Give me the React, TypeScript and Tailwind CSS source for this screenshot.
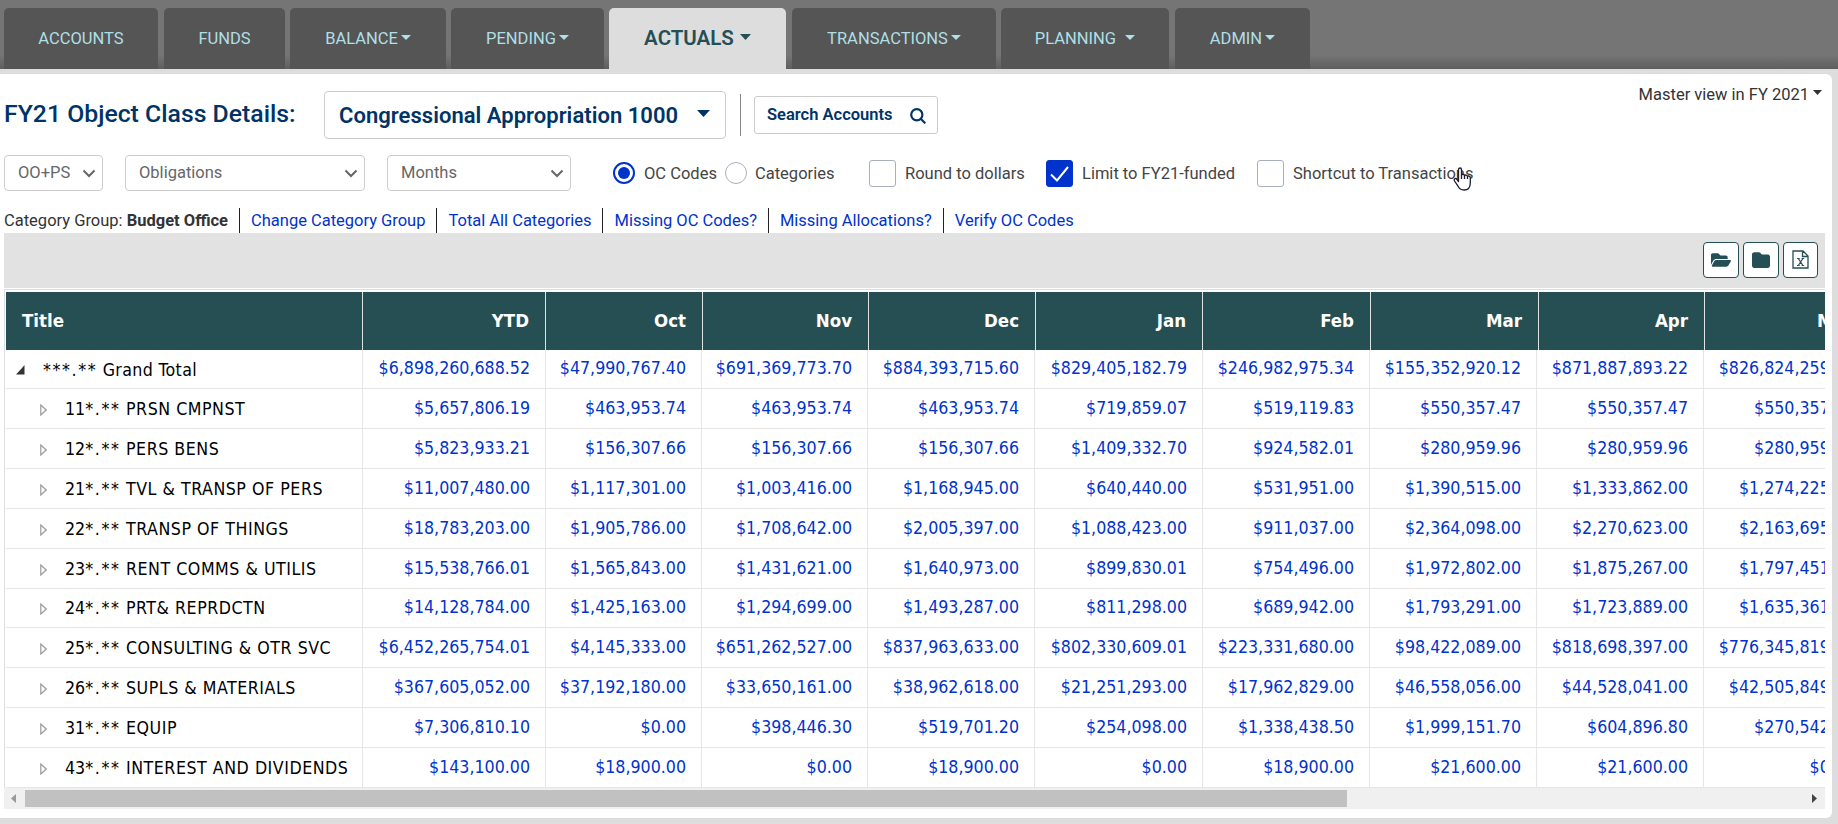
import { FaFolderOpen } from 'react-icons/fa';
import { FaFolder } from 'react-icons/fa6';

const tabs = [
  { label: 'ACCOUNTS', width: 'w-[154px]', caret: false, gap: 'mr-[6px]' },
  { label: 'FUNDS', width: 'w-[121px]', caret: false, gap: 'mr-[5px]' },
  { label: 'BALANCE', width: 'w-[156px]', caret: true, gap: 'mr-[5px]' },
  { label: 'PENDING', width: 'w-[153px]', caret: true, gap: 'mr-[5px]' },
  { label: 'ACTUALS', width: 'w-[177px]', caret: true, active: true, gap: 'mr-[6px]' },
  { label: 'TRANSACTIONS', width: 'w-[204px]', caret: true, gap: 'mr-[5px]' },
  { label: 'PLANNING', width: 'w-[168px]', caret: true, wide: true, gap: 'mr-[6px]' },
  { label: 'ADMIN', width: 'w-[135px]', caret: true, gap: '' },
];

const links = ['Change Category Group', 'Total All Categories', 'Missing OC Codes?', 'Missing Allocations?', 'Verify OC Codes'];

const columns = ['YTD', 'Oct', 'Nov', 'Dec', 'Jan', 'Feb', 'Mar', 'Apr', 'May'];

const headGrid = 'grid grid-cols-[357px_183px_157px_166px_167px_167px_168px_168px_166px_167px]';
const bodyGrid = 'grid grid-cols-[357px_183px_156px_166px_167px_168px_167px_167px_167px_167px]';

const rows = [
  { code: '', mask: '***.**', title: 'Grand Total', height: 'h-[39px]', values: ['$6,898,260,688.52', '$47,990,767.40', '$691,369,773.70', '$884,393,715.60', '$829,405,182.79', '$246,982,975.34', '$155,352,920.12', '$871,887,893.22', '$826,824,259.00'] },
  { code: '11', mask: '*.**', title: 'PRSN CMPNST', height: 'h-[40px]', values: ['$5,657,806.19', '$463,953.74', '$463,953.74', '$463,953.74', '$719,859.07', '$519,119.83', '$550,357.47', '$550,357.47', '$550,357.47'] },
  { code: '12', mask: '*.**', title: 'PERS BENS', height: 'h-[40px]', values: ['$5,823,933.21', '$156,307.66', '$156,307.66', '$156,307.66', '$1,409,332.70', '$924,582.01', '$280,959.96', '$280,959.96', '$280,959.96'] },
  { code: '21', mask: '*.**', title: 'TVL & TRANSP OF PERS', height: 'h-[40px]', values: ['$11,007,480.00', '$1,117,301.00', '$1,003,416.00', '$1,168,945.00', '$640,440.00', '$531,951.00', '$1,390,515.00', '$1,333,862.00', '$1,274,225.00'] },
  { code: '22', mask: '*.**', title: 'TRANSP OF THINGS', height: 'h-[40px]', values: ['$18,783,203.00', '$1,905,786.00', '$1,708,642.00', '$2,005,397.00', '$1,088,423.00', '$911,037.00', '$2,364,098.00', '$2,270,623.00', '$2,163,695.00'] },
  { code: '23', mask: '*.**', title: 'RENT COMMS & UTILIS', height: 'h-[40px]', values: ['$15,538,766.01', '$1,565,843.00', '$1,431,621.00', '$1,640,973.00', '$899,830.01', '$754,496.00', '$1,972,802.00', '$1,875,267.00', '$1,797,451.00'] },
  { code: '24', mask: '*.**', title: 'PRT& REPRDCTN', height: 'h-[39px]', values: ['$14,128,784.00', '$1,425,163.00', '$1,294,699.00', '$1,493,287.00', '$811,298.00', '$689,942.00', '$1,793,291.00', '$1,723,889.00', '$1,635,361.00'] },
  { code: '25', mask: '*.**', title: 'CONSULTING & OTR SVC', height: 'h-[40px]', values: ['$6,452,265,754.01', '$4,145,333.00', '$651,262,527.00', '$837,963,633.00', '$802,330,609.01', '$223,331,680.00', '$98,422,089.00', '$818,698,397.00', '$776,345,819.00'] },
  { code: '26', mask: '*.**', title: 'SUPLS & MATERIALS', height: 'h-[40px]', values: ['$367,605,052.00', '$37,192,180.00', '$33,650,161.00', '$38,962,618.00', '$21,251,293.00', '$17,962,829.00', '$46,558,056.00', '$44,528,041.00', '$42,505,849.00'] },
  { code: '31', mask: '*.**', title: 'EQUIP', height: 'h-[40px]', values: ['$7,306,810.10', '$0.00', '$398,446.30', '$519,701.20', '$254,098.00', '$1,338,438.50', '$1,999,151.70', '$604,896.80', '$270,542.00'] },
  { code: '43', mask: '*.**', title: 'INTEREST AND DIVIDENDS', height: 'h-[40px]', values: ['$143,100.00', '$18,900.00', '$0.00', '$18,900.00', '$0.00', '$18,900.00', '$21,600.00', '$21,600.00', '$0.00'] },
];

function Caret({ className = '' }: { className?: string }) {
  return (
    <svg className={className} viewBox="0 0 10 5" fill="currentColor" preserveAspectRatio="none">
      <path d="M0 0h10L5 5z" />
    </svg>
  );
}

function Select({ label, className }: { label: string; className: string }) {
  return (
    <button className={`flex h-9 items-center justify-between rounded border border-[#ccc] pl-[13px] pr-[6px] pt-px text-[#666] ${className}`}>
      {label}
      <svg className="h-[9px] w-[14px]" viewBox="0 0 14 9" fill="none" stroke="currentColor" strokeWidth="2">
        <path d="M1.5 1.5 7 7l5.5-5.5" />
      </svg>
    </button>
  );
}

function Checkbox({ label, checked = false, className = '' }: { label: string; checked?: boolean; className?: string }) {
  return (
    <label className={`mt-px flex items-center gap-[9px] whitespace-nowrap ${className}`}>
      <span className={`flex h-[27px] w-[27px] items-center justify-center rounded-[3px] border ${checked ? 'border-[#0033cc] bg-[#0033cc]' : 'border-[#a9afbb] bg-white'}`}>
        {checked && (
          <svg className="h-4 w-[19px]" viewBox="0 0 19 16" fill="none" stroke="white" strokeWidth="2">
            <path d="M1 8.5 7 14.5 18 1" />
          </svg>
        )}
      </span>
      <span className="pt-[2px]">{label}</span>
    </label>
  );
}

export default function App() {
  return (
    <div className="h-[824px] w-[1838px] overflow-hidden bg-[#ddd] font-['Roboto',sans-serif] text-[16.5px] text-[#333]">
      <nav className="flex h-[69px] items-end bg-[linear-gradient(#757575_0px,#757575_55px,#5e5e5e_69px)] pl-1">
        {tabs.map((tab) => (
          <a
            key={tab.label}
            className={`flex h-[61px] items-center justify-center whitespace-nowrap rounded-t-[5px] ${tab.width} ${tab.gap} ${
              tab.active ? 'bg-[#ddd] pb-px text-[20.5px] font-semibold text-[#244f54]' : 'bg-[#555] pt-px text-[#b0dfe5]'
            }`}
          >
            {tab.label}
            {tab.caret && (
              <Caret className={tab.active ? 'mb-[3px] ml-[6px] h-[6px] w-[11px]' : tab.wide ? 'mb-[4px] ml-[9px] h-[5px] w-[10px]' : 'mb-[4px] ml-[3px] h-[5px] w-[10px]'} />
            )}
          </a>
        ))}
      </nav>

      <main className="mt-[5px] h-[744px] w-[1832px] rounded-r-md bg-white pl-1 pr-[7px]">
        <div className="flex h-[80px] items-start">
          <h1 className="mt-[23px] w-[320px] whitespace-nowrap text-[24.8px] font-medium leading-[34px] text-[#003366]">FY21 Object Class Details:</h1>
          <button className="mt-[17px] flex h-[48px] w-[402px] items-center justify-between rounded border border-[#ccc] pl-[14px] pr-[15px] text-[22px] font-semibold tracking-[0.04px] text-[#003366]">
            Congressional Appropriation 1000
            <Caret className="mb-[3px] h-[7px] w-[13px]" />
          </button>
          <div className="ml-[14px] mt-5 h-[42px] w-px bg-[#888]" />
          <button className="ml-[13px] mt-[22px] flex h-[38px] w-[184px] items-center justify-between rounded-[3px] border border-[#ccc] pl-3 pr-[11px] pt-px font-semibold text-[#003366]">
            Search Accounts
            <svg className="h-4 w-4" viewBox="0 0 16 16" fill="none" stroke="currentColor" strokeWidth="2.2">
              <circle cx="6.8" cy="6.8" r="5.6" />
              <path d="M11 11l4.3 4.3" />
            </svg>
          </button>
          <div className="ml-auto mt-[10px] flex items-center leading-[22px]">
            Master view in FY 2021
            <Caret className="mb-[6px] ml-1 mr-[3px] h-[5px] w-[9px]" />
          </div>
        </div>

        <div className="flex h-[38px] items-center text-[#444]">
          <Select label="OO+PS" className="w-[99px]" />
          <Select label="Obligations" className="ml-[22px] w-[240px]" />
          <Select label="Months" className="ml-[22px] w-[184px]" />
          <label className="ml-[42px] flex w-[112px] items-center whitespace-nowrap">
            <span className="flex h-[22px] w-[22px] items-center justify-center rounded-full border-2 border-[#0033cc]">
              <span className="h-3 w-3 rounded-full bg-[#0033cc]" />
            </span>
            <span className="ml-[9px] mt-[2px]">OC Codes</span>
          </label>
          <label className="flex w-[144px] items-center">
            <span className="h-[22px] w-[22px] rounded-full border border-[#a9afbb]" />
            <span className="ml-[8px] mt-[2px]">Categories</span>
          </label>
          <Checkbox label="Round to dollars" className="w-[177px]" />
          <Checkbox label="Limit to FY21-funded" checked className="w-[211px]" />
          <div className="relative">
            <Checkbox label="Shortcut to Transactions" />
            <svg className="absolute left-[196px] top-[8px] h-6 w-[19px]" viewBox="0 0 19 24" fill="white" stroke="#1c1c2b" strokeWidth="1.3" strokeLinejoin="round">
              <path d="M5.5 14.5V2.7c0-2.3 3-2.3 3 0V8c.4-1.1 2.9-1 3 .6.5-1 2.8-.8 3 .8.7-.8 2.8-.4 2.8 1.3v5c0 4.3-2.3 7.3-6.3 7.3-3.5 0-5-1.7-6.3-4.3L1.500 14c-1-2 1-3.300 2.400-1.700z" />
              <path d="M8.5 8v4M11.5 8.6V12M14.5 9.4V12" />
            </svg>
          </div>
        </div>

        <div className="mt-4 flex h-[25px] items-center">
          <span className="whitespace-nowrap pr-[11px] pt-px">
            Category Group: <b>Budget Office</b>
          </span>
          {links.map((link) => (
            <a key={link} className="h-[25px] whitespace-nowrap border-l border-[#222] pl-[11px] pr-[11px] leading-[26px] tracking-[-0.01px] text-[#0033cc]">
              {link}
            </a>
          ))}
        </div>

        <div className="flex h-[55px] items-center justify-end gap-1 bg-[#e2e2e2] pb-[2px] pr-[7px] text-[#244f54]">
          <button className="flex h-9 w-9 items-center justify-center rounded border border-[#244f54] bg-white">
            <FaFolderOpen className="h-5 w-5" />
          </button>
          <button className="flex h-9 w-9 items-center justify-center rounded border border-[#244f54] bg-white">
            <FaFolder className="h-[18px] w-[18px]" />
          </button>
          <button className="flex h-9 w-[35px] items-center justify-center rounded border border-[#244f54] bg-white">
            <svg className="h-[19px] w-[17px]" viewBox="0 0 17 19" fill="none" stroke="currentColor" strokeWidth="1.3">
              <path d="M1 1h10l5 5v12H1zM10.5 1v5.5H16" />
              <path d="M6.3 8.5l4.6 7M10.9 8.5l-4.6 7M5 8.5h2.7M9.6 8.5h2.6M5 15.5h2.7M9.6 15.5h2.6" strokeWidth="1.2" />
            </svg>
          </button>
        </div>

        <div className="mt-px h-[499px] overflow-hidden border-l border-t border-[#dcdfe2] pl-px pt-[2px] font-['DejaVu_Sans_Condensed','DejaVu_Sans',sans-serif] text-[17.65px] [font-stretch:condensed]">
          <div className={`h-[58px] bg-[#264f54] text-[18.5px] font-bold text-white ${headGrid}`}>
            <div className="flex items-center border-r border-[#e0e4e5] pl-4">Title</div>
            {columns.map((column) => (
              <div key={column} className="flex items-center justify-end border-r border-[#e0e4e5] pr-4">
                {column}
              </div>
            ))}
          </div>
          {rows.map((row, i) => (
            <div key={row.title} className={`${row.height} ${bodyGrid} text-[#0033cc]`}>
              <div className="flex items-center whitespace-nowrap border-b border-r border-[#e6e6e6] text-black">
                {i === 0 ? (
                  <svg className="ml-[10px] mr-[18px] mt-px h-[10px] w-[9px]" viewBox="0 0 9 10" fill="#333">
                    <path d="M8.5 0v9.5H0L6 3z" />
                  </svg>
                ) : (
                  <svg className="ml-[34px] mr-[18px] mt-[2px] h-[12px] w-[7px]" viewBox="0 0 7 12" fill="none" stroke="#a0a0a0" strokeWidth="1.3">
                    <path d="M.8 1v10L6.2 6z" />
                  </svg>
                )}
                <span className={i === 0 ? 'pt-[3px] tracking-[0.35px]' : 'pt-px tracking-[0.52px]'}>
                  <span className="tracking-normal">{row.code}</span>
                  <span className="tracking-[1.6px]">{row.mask}</span> {row.title}
                </span>
              </div>
              {row.values.map((value, j) => (
                <div key={j} className="flex items-center justify-end border-b border-r border-[#e6e6e6] pb-px pr-[15px]">
                  {value}
                </div>
              ))}
            </div>
          ))}
        </div>

        <div className="flex h-[21px] items-center bg-[#f0f0f0] py-[2px]">
          <svg className="ml-[7px] mr-[9px] h-[9px] w-[5px]" viewBox="0 0 5 9" fill="#999">
            <path d="M5 0v9L0 4.5z" />
          </svg>
          <div className="h-[17px] w-[1322px] bg-[#c1c1c1]" />
          <svg className="ml-auto mr-2 h-[9px] w-[5px]" viewBox="0 0 5 9" fill="#444">
            <path d="M0 0v9l5-4.5z" />
          </svg>
        </div>
      </main>
    </div>
  );
}
